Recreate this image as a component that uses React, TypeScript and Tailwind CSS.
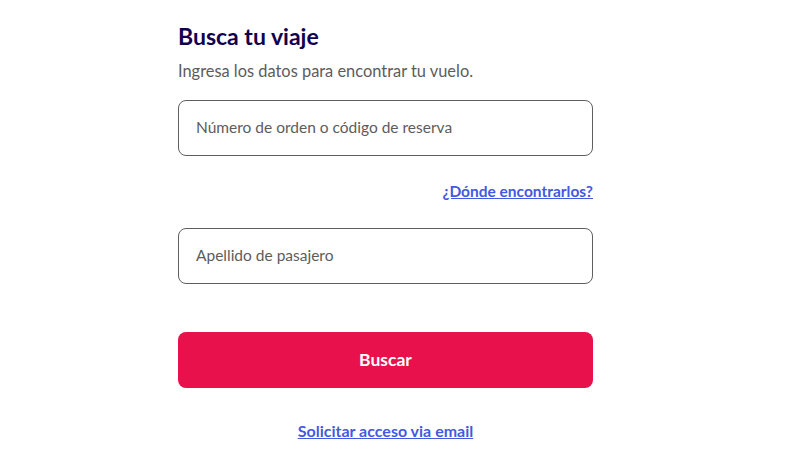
export default function App() {
  return (
    <div className="min-h-[470px] bg-white font-['Lato',sans-serif]">
      <div className="ml-[178px] w-[415px] pt-[22px]">
        <h1 className="text-[23px] font-bold leading-[28px] text-[#10004f]">Busca tu viaje</h1>
        <p className="mt-[11px] text-[16.4px] leading-[20px] text-[#5c5c5c]">
          Ingresa los datos para encontrar tu vuelo.
        </p>

        <div className="mt-[19px] flex h-[56px] items-center rounded-[8px] border border-[#5f5f5f] px-[17px]">
          <span className="text-[15.5px] text-[#5c5c5c]">Número de orden o código de reserva</span>
        </div>

        <div className="mt-[25px] flex justify-end">
          <a href="#" className="text-[15.5px] font-bold leading-[20px] text-[#4658df] underline">
            ¿Dónde encontrarlos?
          </a>
        </div>

        <div className="mt-[27px] flex h-[56px] items-center rounded-[8px] border border-[#5f5f5f] px-[17px]">
          <span className="text-[15.5px] text-[#5c5c5c]">Apellido de pasajero</span>
        </div>

        <button className="mt-[48px] flex h-[56px] w-full items-center justify-center rounded-[8px] bg-[#e8114b] text-[17.5px] font-bold text-white">
          Buscar
        </button>

        <div className="mt-[33px] flex justify-center">
          <a href="#" className="text-[16px] font-bold leading-[20px] text-[#4658df] underline">
            Solicitar acceso via email
          </a>
        </div>
      </div>
    </div>
  );
}
